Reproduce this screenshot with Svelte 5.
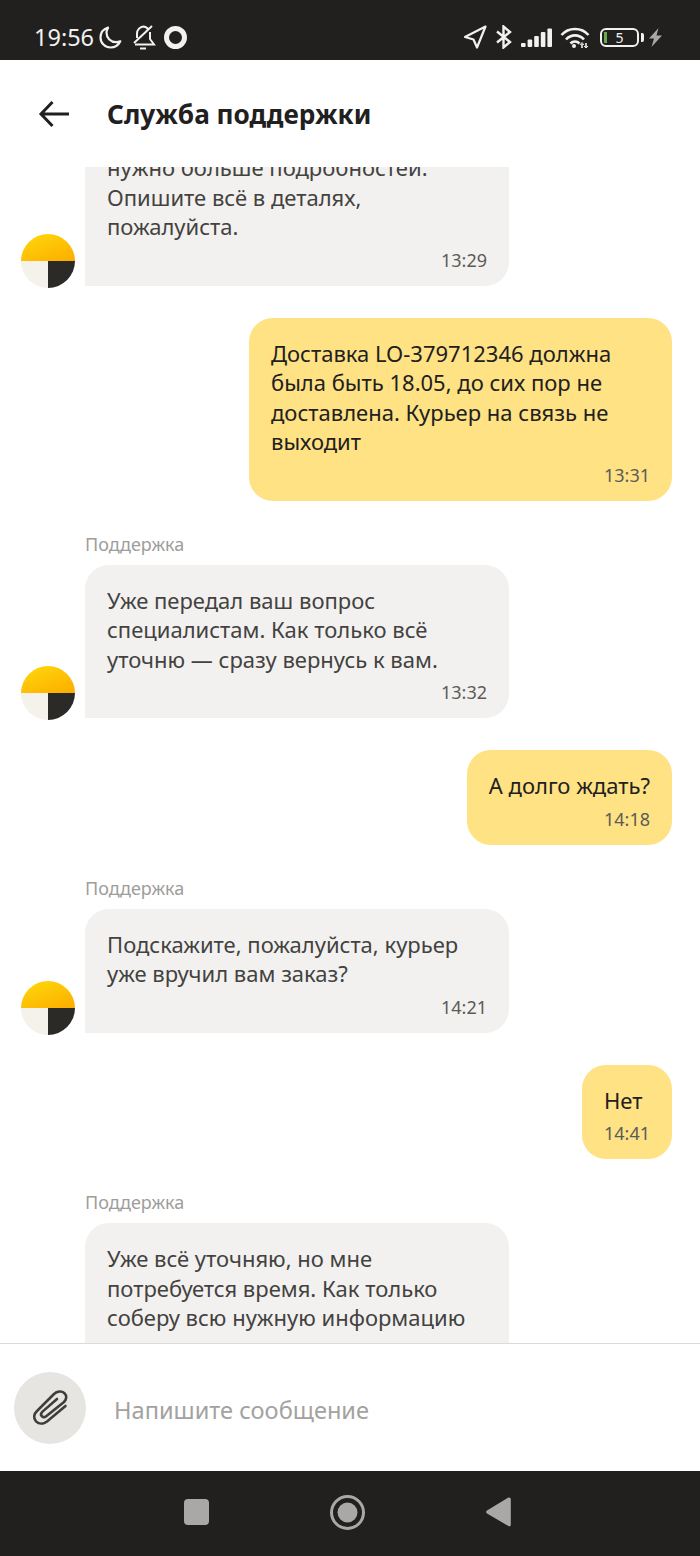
<script>
  const messages = [
    { from: "them", text: "нужно больше подробностей. Опишите всё в деталях, пожалуйста.", time: "13:29" },
    { from: "me", text: "Доставка LO-379712346 должна была быть 18.05, до сих пор не доставлена. Курьер на связь не выходит", time: "13:31" },
    { from: "them", label: true, text: "Уже передал ваш вопрос специалистам. Как только всё уточню — сразу вернусь к вам.", time: "13:32" },
    { from: "me", text: "А долго ждать?", time: "14:18" },
    { from: "them", label: true, text: "Подскажите, пожалуйста, курьер уже вручил вам заказ?", time: "14:21" },
    { from: "me", text: "Нет", time: "14:41" },
    { from: "them", label: true, text: "Уже всё уточняю, но мне потребуется время. Как только соберу всю нужную информацию — сразу вернусь к вам.", time: "14:44" },
  ];
</script>

<div class="screen">
  <div class="status">
    <div class="status-left">
      <span class="clock">19:56</span>
      <svg class="moon" width="23" height="23" viewBox="0 0 23 23" fill="none" stroke="#f2f1ef" stroke-width="2.200" stroke-linejoin="round"><path d="M9 1.500C4.500 3 1.500 6.800 1.500 11.500c0 5.500 4.500 10 10 10 4.300 0 8-2.400 9.800-6.200-1.300.6-2.700.9-4.200.9-5.300 0-9.600-4.300-9.600-9.400 0-1.800.5-3.500 1.500-4.800z" /></svg>
      <svg class="bell" width="24" height="26" viewBox="0 0 24 26" fill="none" stroke="#f2f1ef" stroke-width="2"><path d="M20 2 2 19M5 14V9.500c0-3.500 2.700-6.500 6-7M11 2.500c2.300 0 4.300 1.200 5.500 3.200M18 8v7l4 5.500H3M8 24.500h6" /></svg>
      <span class="ring"></span>
    </div>
    <div class="status-right">
      <svg width="24" height="24" viewBox="0 0 24 24" fill="none" stroke="#f2f1ef" stroke-width="2.200" stroke-linejoin="round"><path d="M22.500 1.500 2 12l8.500 2.500 3.500 8z" /></svg>
      <svg width="16" height="24" viewBox="0 0 16 24" fill="none" stroke="#f2f1ef" stroke-width="2.400"><path d="M1 6.500 14 17l-6.500 5.500v-21L14 7 1 17.500" /></svg>
      <svg width="31" height="19" viewBox="0 0 31 19" fill="#f2f1ef"><rect x="0" y="15" width="4.600" height="4" rx="1" /><rect x="6.600" y="11.500" width="4.600" height="7.500" rx="1" /><rect x="13.200" y="8" width="4.600" height="11" rx="1" /><rect x="19.800" y="4" width="4.600" height="15" rx="1" /><rect x="26.400" y="0.500" width="4.600" height="18.500" rx="1" /></svg>
      <svg class="wifi" width="30" height="22" viewBox="0 0 30 22" fill="none" stroke="#f2f1ef" stroke-width="2.600"><path d="M1.500 9C8.500 1 21.500 1 28.500 9M6 13.500C11 8 19 8 24 13.500M10.500 17.500c2.500-2.600 6.500-2.600 9 0" /><circle cx="14" cy="20" r="2" fill="#f2f1ef" stroke="none" /><path d="M22 22v-4M26 17v4" stroke-width="1.600" /><path d="M20 19l2-2.500 2 2.500M24 20l2 2 2-2" stroke-width="1" /></svg>
      <span class="battery"><span class="level"></span><span class="pct">5</span></span>
      <svg class="bolt" width="13" height="19" viewBox="0 0 13 19" fill="#a9a8a6"><path d="M9.500 0 0 10.500h5L2.500 19 13 7.500H7.500z" /></svg>
    </div>
  </div>

  <header class="top">
    <svg width="32" height="32" viewBox="0 0 32 32" fill="none" stroke="#21201f" stroke-width="3"><path d="M31 16H3M14.500 4 3 16l11.500 12" /></svg>
    <h1>Служба поддержки</h1>
  </header>

  <main class="chat">
    <div class="list">
      {#each messages as m}
        {#if m.label}
          <div class="label">Поддержка</div>
        {/if}
        <div class="row {m.from}">
          {#if m.from === "them"}
            <svg class="avatar" width="54" height="54" viewBox="0 0 54 54">
              <defs>
                <linearGradient id="sun" x1="0.2" y1="0" x2="0.9" y2="1">
                  <stop offset="0" stop-color="#ffd60a" />
                  <stop offset="1" stop-color="#fcae00" />
                </linearGradient>
              </defs>
              <path d="M0 27a27 27 0 0 1 54 0z" fill="url(#sun)" />
              <path d="M0 27h27v27A27 27 0 0 1 0 27z" fill="#f4f2ea" />
              <path d="M27 27h27a27 27 0 0 1-27 27z" fill="#2c2a26" />
            </svg>
          {/if}
          <div class="bubble">
            <div>{m.text}</div>
            <div class="time">{m.time}</div>
          </div>
        </div>
      {/each}
    </div>
  </main>

  <div class="composer">
    <button class="attach" aria-label="Прикрепить">
      <svg width="40" height="40" viewBox="0 0 40 40" fill="none" stroke="#3f3e3b" stroke-width="2.600" stroke-linecap="round"><path d="M35.500 18 17 33.500c-3.500 2.800-8 2.800-11-.2-2.800-3-2.300-7.300 1-10.300L24 6c3-2.800 7.500-3.500 10.500-.8 2.800 2.600 2 6.500-.8 9L16.500 28c-1.500 1.300-3.500 1.500-4.700.2-1.200-1.300-.8-3.200.7-4.600L27 11" /></svg>
    </button>
    <span class="placeholder">Напишите сообщение</span>
  </div>

  <nav class="nav">
    <span class="square"></span>
    <svg width="35" height="35" viewBox="0 0 35 35"><circle cx="17.500" cy="17.500" r="16" fill="none" stroke="#a9a8a6" stroke-width="3" /><circle cx="17.500" cy="17.500" r="10" fill="#a9a8a6" /></svg>
    <svg width="25" height="30" viewBox="0 0 25 30" fill="#a9a8a6"><path d="M23 .5c1 0 1.800.7 1.800 1.800v25.400c0 1.200-1.200 2-2.300 1.400L1 16.500c-1.200-.7-1.200-2.300 0-3L22 .8c.3-.2.700-.3 1-.3z" /></svg>
  </nav>
</div>

<style>
  :global(body) {
    margin: 0;
    background: #fff;
  }

  .screen {
    width: 700px;
    height: 1556px;
    display: flex;
    flex-direction: column;
    overflow: hidden;
    font-family: "Noto Sans", "Open Sans", sans-serif;
    color: #21201f;
  }

  .status {
    height: 60px;
    flex: none;
    background: #21201f;
    display: flex;
    justify-content: space-between;
    align-items: center;
    padding: 14px 38px 0 34px;
    box-sizing: border-box;
    color: #f2f1ef;
  }

  .status-left,
  .status-right {
    display: flex;
    align-items: center;
  }

  .status-right {
    gap: 9px;
  }

  .clock {
    font-size: 23.500px;
    line-height: 28px;
  }

  .moon {
    margin-left: 5px;
  }

  .bell {
    margin-left: 10px;
  }

  .ring {
    width: 13px;
    height: 13px;
    border: 5px solid #f2f1ef;
    border-radius: 50%;
    margin-left: 8px;
  }

  .wifi {
    margin-left: -1px;
  }

  .battery {
    position: relative;
    width: 39px;
    height: 19px;
    margin-left: 1px;
    margin-right: 1px;
    border: 2px solid #f2f1ef;
    border-radius: 6px;
    display: flex;
    align-items: center;
    justify-content: center;
    box-sizing: border-box;
  }

  .battery::after {
    content: "";
    position: absolute;
    right: -7px;
    top: 3px;
    width: 3px;
    height: 9px;
    border-radius: 0 2px 2px 0;
    background: #f2f1ef;
  }

  .level {
    position: absolute;
    left: 2px;
    top: 2px;
    width: 3px;
    height: 11px;
    background: #69a84f;
  }

  .pct {
    font-size: 14px;
    line-height: 15px;
  }

  .top {
    height: 107px;
    flex: none;
    display: flex;
    align-items: center;
    padding-left: 38px;
    gap: 37px;
    box-sizing: border-box;
  }

  h1 {
    margin: 0;
    font-size: 26.200px;
    font-weight: 700;
  }

  .chat {
    flex: 1;
    overflow: hidden;
    min-height: 0;
  }

  /* the list is scrolled, first bubble is cut by the header */
  .list {
    margin-top: -35px;
    display: flex;
    flex-direction: column;
    padding: 0 28px 0 21px;
  }

  .label {
    margin: 32px 0 10px 64px;
    font-size: 18px;
    line-height: 22px;
    color: #9e9d9b;
  }

  .row {
    display: flex;
    align-items: flex-end;
    gap: 10px;
  }

  .row.me {
    justify-content: flex-end;
    margin-top: 32px;
  }

  .avatar {
    flex: none;
    margin-bottom: -2px;
  }

  .bubble {
    box-sizing: border-box;
    max-width: 423px;
    padding: 21px 22px 14px;
    border-radius: 24px;
    font-size: 22px;
    line-height: 29.500px;
    color: #21201f;
    background: #fee283;
  }

  .them .bubble {
    width: 424px;
    max-width: none;
    background: #f2f1ef;
    color: #43423f;
    border-bottom-left-radius: 0;
  }

  .time {
    margin-top: 6px;
    text-align: right;
    font-size: 18px;
    line-height: 24px;
    color: #5c5b59;
  }

  .composer {
    height: 128px;
    flex: none;
    box-sizing: border-box;
    border-top: 1px solid #dcdbd9;
    display: flex;
    align-items: center;
    padding-left: 14px;
    gap: 28px;
    background: #fff;
  }

  .attach {
    width: 72px;
    height: 72px;
    border: none;
    padding: 0;
    border-radius: 50%;
    background: #e6e5e2;
    display: flex;
    align-items: center;
    justify-content: center;
  }

  .placeholder {
    margin-top: 4px;
    font-size: 23.600px;
    color: #a3a2a0;
  }

  .nav {
    height: 85px;
    flex: none;
    background: #21201f;
    display: flex;
    align-items: center;
    justify-content: center;
    gap: 121px;
    padding: 0 5px 3px 0;
    box-sizing: border-box;
  }

  .square {
    width: 25px;
    height: 26px;
    border-radius: 4px;
    background: #a9a8a6;
  }
</style>
